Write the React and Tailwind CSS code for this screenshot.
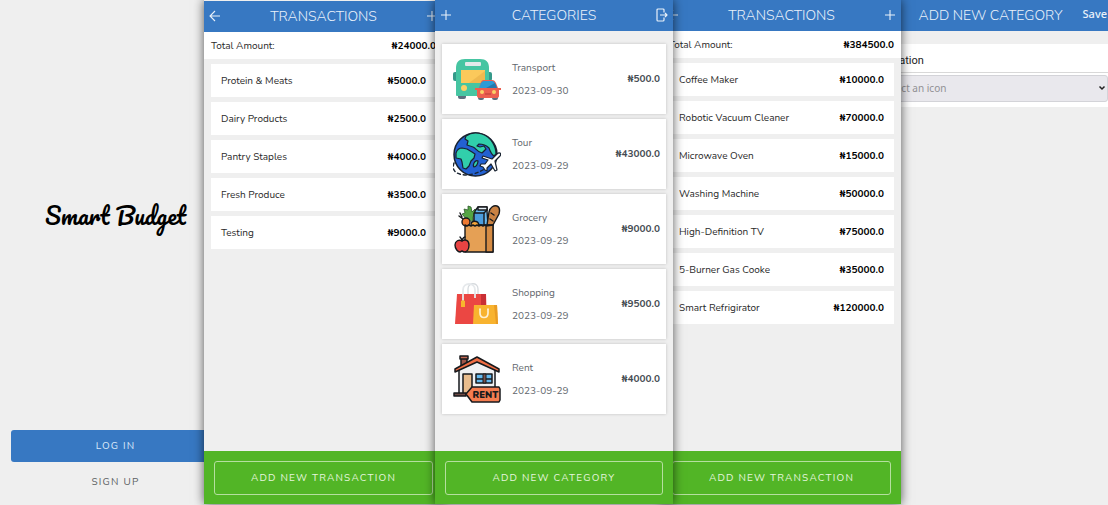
import React from "react";

const groceries = [
  ["Protein & Meats", "5000.0"],
  ["Dairy Products", "2500.0"],
  ["Pantry Staples", "4000.0"],
  ["Fresh Produce", "3500.0"],
  ["Testing", "9000.0"],
];

const appliances = [
  ["Coffee Maker", "10000.0"],
  ["Robotic Vacuum Cleaner", "70000.0"],
  ["Microwave Oven", "15000.0"],
  ["Washing Machine", "50000.0"],
  ["High-Definition TV", "75000.0"],
  ["5-Burner Gas Cooke", "35000.0"],
  ["Smart Refrigirator", "120000.0"],
];

function Transport() {
  return (
    <svg viewBox="0 0 48 48" className="size-12 shrink-0" aria-hidden="true">
      <rect x="0" y="17" width="5" height="9" rx="2" fill="#35998a" />
      <rect x="34" y="17" width="5" height="9" rx="2" fill="#35998a" />
      <rect x="5" y="38" width="8" height="6" rx="2" fill="#5d6d7e" />
      <path d="M3 40V13c0-6 3-9 9-9h15c6 0 9 3 9 9v28H5c-1 0-2 0-2-1Z" fill="#46c5a2" />
      <rect x="12" y="7" width="16" height="4" rx="1" fill="#e2e9ea" />
      <path d="M8 15h24v13H8z" fill="#fbc95b" />
      <path d="m32 16-16 12h16z" fill="#efb94f" />
      <circle cx="11" cy="33" r="3" fill="#fbd066" />
      <rect x="25" y="40" width="6" height="5" rx="2" fill="#5d6d7e" />
      <rect x="39" y="40" width="6" height="5" rx="2" fill="#5d6d7e" />
      <path d="M22 33h4l2-6c1-2 2-2 4-2h7c2 0 3 1 4 3l2 5h3v2h-2v6c0 1-1 2-2 2H26c-1 0-2-1-2-2v-6h-2z" fill="#ec5f50" />
      <path d="m26 33 2-5c1-1 1-2 3-2h8c2 0 2 1 3 2l2 5z" fill="#2c9bd6" />
      <path d="m42 28 2 5H33z" fill="#2679ae" />
      <circle cx="29" cy="37" r="2" fill="#fbd066" />
      <circle cx="41" cy="37" r="2" fill="#fbd066" />
      <path d="M32 39h6" stroke="#b93f38" />
    </svg>
  );
}

function Tour() {
  return (
    <svg viewBox="0 0 48 48" className="size-12 shrink-0" aria-hidden="true" strokeLinejoin="round" strokeLinecap="round">
      <circle cx="22.5" cy="24.5" r="21.5" fill="#2361d2" stroke="#182230" strokeWidth="1.5" />
      <g fill="#31cfab" stroke="#182230" strokeWidth="1.2">
        <path d="M13 6C17 3 23 2 29 4c9 3 14 12 14 20l-2 2c-3-2-4-5-5-8-3-3-7-4-10-4l-2 2 3 1 4-1 2 3-4 4c-5-1-6-5-9-6l-6-2 1-4-3-2Z" />
        <path d="M3 23c1-3 3-5 6-5l5 1 5 3 3 2-1 4-3 3-2 5-3 3-3-1-1-6-1-3-5-1Z" />
        <path d="M21 33c1-2 3-3 4-2 0 3-2 6-4 6-1-1-1-2 0-4Z" />
      </g>
      <path d="M1 33c-3 9 4 12 13 12 8-1 13-3 19-7" fill="none" stroke="#182230" strokeWidth="1.4" strokeDasharray="3 3" />
      <path d="m30 26 9 3 5-5c2-2 5-1 3 2l-5 5 2 9-2 1-4-7-4 4v3l-2-1-2-3-3-1 1-2h4l3-4-6-2Z" fill="#fff" stroke="#182230" strokeWidth="1.2" />
    </svg>
  );
}

function Grocery() {
  return (
    <svg viewBox="0 0 48 48" className="size-12 shrink-0" aria-hidden="true" stroke="#17191c" strokeWidth="1.4" strokeLinejoin="round" strokeLinecap="round">
      <path d="M14 15 9 9l3-1-1-4 4 1V1l3 1 1 5 3-3 1 3-3 5v4z" fill="#55a544" stroke="#2f5a2b" strokeWidth="0.8" />
      <path d="m7 8 2 4M6 11l4 3" />
      <circle cx="13" cy="17" r="4" fill="#ed7932" />
      <path d="m22 6 3-4h9v4l1 14H21z" fill="#68b8ee" />
      <path d="M25 2h9v3h-9z" fill="#e9f2f8" />
      <path d="M21 8h10v12H21z" fill="#4b9ddd" />
      <path d="m31 8 3-3" />
      <path d="m34 20 2-13c1-5 5-7 8-6s3 4 2 8l-6 11z" fill="#c98243" />
      <path d="m38 8 3 2m-4 4 3 2" />
      <path d="M18 20c0-5 7-5 8 0" fill="#f6a43a" />
      <path d="m12 20 2 1 2-1 2 1 2-1 2 1 2-1 2 1 2-1 2 1 2-1 2 1 2-1 2 1 2-1v27H12z" fill="#e5a055" />
      <path d="M33 21v26h7V20z" fill="#d58b43" />
      <path d="M9 36c-3-2-7 0-7 4s3 7 5 7l2-1 2 1c3 0 5-3 5-7 0-5-4-6-7-4Z" fill="#e84443" />
      <path d="M9 36c0-2-1-3-2-4m2 3c1-2 2-3 3-3" fill="none" />
    </svg>
  );
}

function Shopping() {
  return (
    <svg viewBox="0 0 48 48" className="size-12 shrink-0" aria-hidden="true" fill="none">
      <path d="M15 14V9c0-7 10-7 10 0v5" stroke="#d6dade" strokeWidth="1.3" />
      <path d="M4 14h29l1 30H2z" fill="#eb4743" />
      <path d="M28 14h5v12h-5z" fill="#c92f35" />
      <path d="M10 21V10c0-8 12-8 12 0v8" stroke="#e6e9ec" strokeWidth="1.8" />
      <path d="m8 21 2-1 2 1v6H8z" fill="#f8b42d" />
      <path d="M21 25h23l1 19H20z" fill="#f8b32f" />
      <path d="m41 25 3 0 1 19h-2z" fill="#e99c24" />
      <path d="M27 29v4c0 6 8 6 8 0v-4" stroke="#fff0d3" strokeWidth="1.7" />
      <path d="M26 29h2m6 0h2" stroke="#fff0d3" />
    </svg>
  );
}

function Rent() {
  return (
    <svg viewBox="0 0 48 48" className="size-12 shrink-0" aria-hidden="true" stroke="#17191c" strokeWidth="1.5" strokeLinejoin="round">
      <path d="M8 3h6v9H8z" fill="#9e5549" />
      <path d="M7 1h8v3H7z" fill="#c26953" />
      <path d="M6 14 24 6l18 8v25H6z" fill="#eff0f2" />
      <path d="M10 19h9v20h-9z" fill="#e8bc8d" />
      <path d="M23 19h16v9H23z" fill="#64b9ef" />
      <path d="M31 19v9M23 24h16" />
      <path d="M30 19h3v9h-3z" fill="#79534d" strokeWidth="1" />
      <path d="M2 14 24 2l22 12v3L24 7 2 17z" fill="#f06d44" />
      <path d="M1 38h12v3H1z" fill="#704b45" />
      <path d="m13 39 6-7h27l1 2v11l-1 2H19z" fill="#f47d50" />
      <text x="32.500" y="43" textAnchor="middle" fill="#17191c" stroke="none" fontFamily="Nunito, sans-serif" fontSize="9.5" fontWeight="900">RENT</text>
    </svg>
  );
}

const categories = [
  ["Transport", "2023-09-30", "500.0", Transport],
  ["Tour", "2023-09-29", "43000.0", Tour],
  ["Grocery", "2023-09-29", "9000.0", Grocery],
  ["Shopping", "2023-09-29", "9500.0", Shopping],
  ["Rent", "2023-09-29", "4000.0", Rent],
];

function Back() {
  return (
    <button aria-label="Back">
      <svg viewBox="0 0 12 12" className="size-3" fill="none" stroke="currentColor" strokeWidth="1.1">
        <path d="M11 6H1m5-5L1 6l5 5" />
      </svg>
    </button>
  );
}

function Plus() {
  return (
    <button aria-label="Add">
      <svg viewBox="0 0 12 12" className="size-3" fill="none" stroke="currentColor" strokeWidth="1.1">
        <path d="M6 1v10M1 6h10" />
      </svg>
    </button>
  );
}

function Exit() {
  return (
    <button aria-label="Log out">
      <svg viewBox="0 0 12 14" className="h-3.5 w-3" fill="none" stroke="currentColor" strokeWidth="1.2" strokeLinejoin="round">
        <path d="M8 4.500V2q0-1-1-1H2Q1 1 1 2v10q0 1 1 1h5q1 0 1-1V9.500M4 7h7M9 5l2 2-2 2" />
      </svg>
    </button>
  );
}

function Header({ left, title, right }) {
  return (
    <header className="grid h-[31px] shrink-0 grid-cols-[1fr_auto_1fr] items-center bg-[#3778c2] px-[5px] text-[#e9f1fa]">
      <div className="flex justify-start pb-0.5">{left}</div>
      <h2 className="text-[14px] leading-5 font-light whitespace-nowrap">{title}</h2>
      <div className="flex justify-end pb-0.5">{right}</div>
    </header>
  );
}

function Footer({ children }) {
  return (
    <footer className="mt-auto bg-[#52b526] px-2.5 pt-2.5 pb-[9px]">
      <button className="h-[34px] w-full rounded-[3px] border border-[#b5df9f] text-[10px] tracking-[1.2px] text-[#e6f5df]">
        {children}
      </button>
    </footer>
  );
}

function Amount({ children }) {
  return <span className="font-bold">₦{children}</span>;
}

function Transactions({ total, items, className }) {
  return (
    <section className={`relative z-20 flex flex-col bg-[#efefef] text-[10px] leading-4 text-[#292929] shadow-[0_0_10px_rgba(0,0,0,0.65)] ${className}`}>
      <Header left={<Back />} title="TRANSACTIONS" right={<Plus />} />
      <div className="flex h-[27px] items-center justify-between bg-white px-[7px]">
        <span>Total Amount:</span>
        <span className="text-black"><Amount>{total}</Amount></span>
      </div>
      <ul className="flex flex-col gap-[5px] px-[7px] pt-[5px]">
        {items.map(([name, amount]) => (
          <li key={name} className="flex h-[33px] items-center justify-between bg-white px-2.5 whitespace-nowrap">
            <span>{name}</span>
            <span className="text-black"><Amount>{amount}</Amount></span>
          </li>
        ))}
      </ul>
      <Footer>ADD NEW TRANSACTION</Footer>
    </section>
  );
}

export default function App() {
  return (
    <main className="grid min-h-screen grid-cols-[204fr_231fr_238fr_228fr_207fr] overflow-hidden bg-[#efefef] pb-px font-['Nunito','Lato',sans-serif]">
      <section className="-mr-7 flex flex-col pr-3 pb-3.5 pl-[11px] text-center text-[10px]">
        <div className="flex grow items-center justify-center">
          <h1 className="font-['Pacifico','Lato',cursive] text-[23px] whitespace-nowrap text-black">Smart Budget</h1>
        </div>
        <button className="h-8 rounded-[3px] bg-[#3778c2] tracking-[1.2px] text-[#dceafa]">LOG IN</button>
        <button className="mt-3 h-4 tracking-[1.2px] text-[#5c5f63]">SIGN UP</button>
      </section>

      <Transactions total="24000.0" items={groceries} className="-mr-2 pt-px" />

      <section className="relative z-30 flex flex-col bg-[#efefef] text-[10px] leading-4 text-[#62676d] shadow-[0_0_10px_rgba(0,0,0,0.65)]">
        <Header left={<Plus />} title="CATEGORIES" right={<Exit />} />
        <ul className="flex flex-col gap-[5px] px-[7px] pt-[13px]">
          {categories.map(([name, date, amount, Icon]) => (
            <li key={name} className="flex h-[70px] items-center bg-white pr-1.5 pl-[11px] shadow-[0_0_3px_rgba(0,0,0,0.2)]">
              <Icon />
              <div className="ml-[11px] flex grow flex-col gap-[7px] pt-px">
                <span>{name}</span>
                <time>{date}</time>
              </div>
              <span className="text-[#454b52]"><Amount>{amount}</Amount></span>
            </li>
          ))}
        </ul>
        <Footer>ADD NEW CATEGORY</Footer>
      </section>

      <Transactions total="384500.0" items={appliances} className="-ml-[11px]" />

      <section className="relative z-10 -ml-7 flex flex-col">
        <Header
          title="ADD NEW CATEGORY"
          right={<button className="-mr-1 font-['Noto_Sans',sans-serif] text-[11px] font-medium">Save</button>}
        />
        <form className="mt-[13px] flex flex-col gap-0.5 bg-white pb-[5px]">
          <input
            aria-label="Category name"
            defaultValue="Education"
            className="h-[29px] w-full border-b border-[#d8d8d8] px-0.5 pt-1 font-['Roboto',sans-serif] text-[11px] text-[#222] outline-none"
          />
          <div className="relative">
            <select
              aria-label="Icon"
              defaultValue=""
              className="h-[27px] w-full appearance-none rounded-[3px] border border-[#d3d3d8] bg-[#e9e8ed] px-2 font-['Noto_Sans',sans-serif] text-[10px] text-[#919195]"
            >
              <option value="">Select an icon</option>
            </select>
            <svg viewBox="0 0 8 6" className="pointer-events-none absolute top-2.5 right-0.5 h-1.5 w-2" fill="none" stroke="#222" strokeWidth="1.5" aria-hidden="true">
              <path d="m1.500 1.500 2.500 2.500 2.500-2.500" />
            </svg>
          </div>
        </form>
      </section>
    </main>
  );
}
